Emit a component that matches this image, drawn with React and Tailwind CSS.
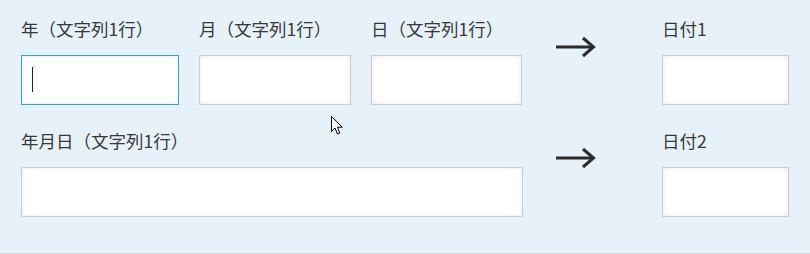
import React from "react";

const font = { fontFamily: '"Noto Sans CJK JP", "Noto Sans", sans-serif' };

function Field({ w, focused }) {
  return (
    <div
      className={`relative h-[50px] bg-white border ${
        focused ? "border-[#3b9be3]" : "border-[#cccccc]"
      } shadow-[inset_0_0_5px_rgba(0,0,0,0.09)]`}
      style={{ width: w }}
    >
      {focused && <div className="absolute left-[10px] top-[11px] w-px h-[25px] bg-[#222]" />}
    </div>
  );
}

function Label({ children }) {
  return <div className="h-[38px] text-[17.5px] leading-[24px] text-[#383838] font-normal whitespace-nowrap">{children}</div>;
}

function Arrow() {
  return (
    <svg width="42" height="22" viewBox="0 0 42 22" className="block">
      <path d="M1 11 H38" stroke="#2b2b2b" strokeWidth="3" fill="none" />
      <path d="M28 2 L38.5 11 L28 20" stroke="#2b2b2b" strokeWidth="3" fill="none" strokeLinejoin="miter" />
    </svg>
  );
}

export default function App() {
  return (
    <div className="relative w-[810px] h-[254px] bg-[#e7f1fa] border-b border-[#d6d6d6] pl-[21px] pt-[17px]" style={font}>
      <div className="flex">
        <div className="w-[501px] flex gap-[20px]">
          <div>
            <Label>年（文字列1行）</Label>
            <Field w={158} focused />
          </div>
          <div>
            <Label>月（文字列1行）</Label>
            <Field w={152} />
          </div>
          <div>
            <Label>日（文字列1行）</Label>
            <Field w={151} />
          </div>
        </div>
        <div className="w-[140px] pl-[33px] pt-[19px]">
          <Arrow />
        </div>
        <div>
          <Label>日付1</Label>
          <Field w={127} />
        </div>
      </div>
      <div className="flex mt-[24px]">
        <div className="w-[501px]">
          <Label>年月日（文字列1行）</Label>
          <Field w={502} />
        </div>
        <div className="w-[140px] pl-[33px] pt-[18px]">
          <Arrow />
        </div>
        <div>
          <Label>日付2</Label>
          <Field w={127} />
        </div>
      </div>
      <svg className="absolute left-[331px] top-[116px]" width="13" height="20" viewBox="0 0 13 20">
        <path
          d="M0.5 0.5 L0.5 15.5 L4 12 L6.5 18 L8.8 17 L6.3 11.2 L11.3 11.2 Z"
          fill="#fff"
          stroke="#000"
          strokeWidth="1"
          strokeLinejoin="miter"
        />
      </svg>
    </div>
  );
}
